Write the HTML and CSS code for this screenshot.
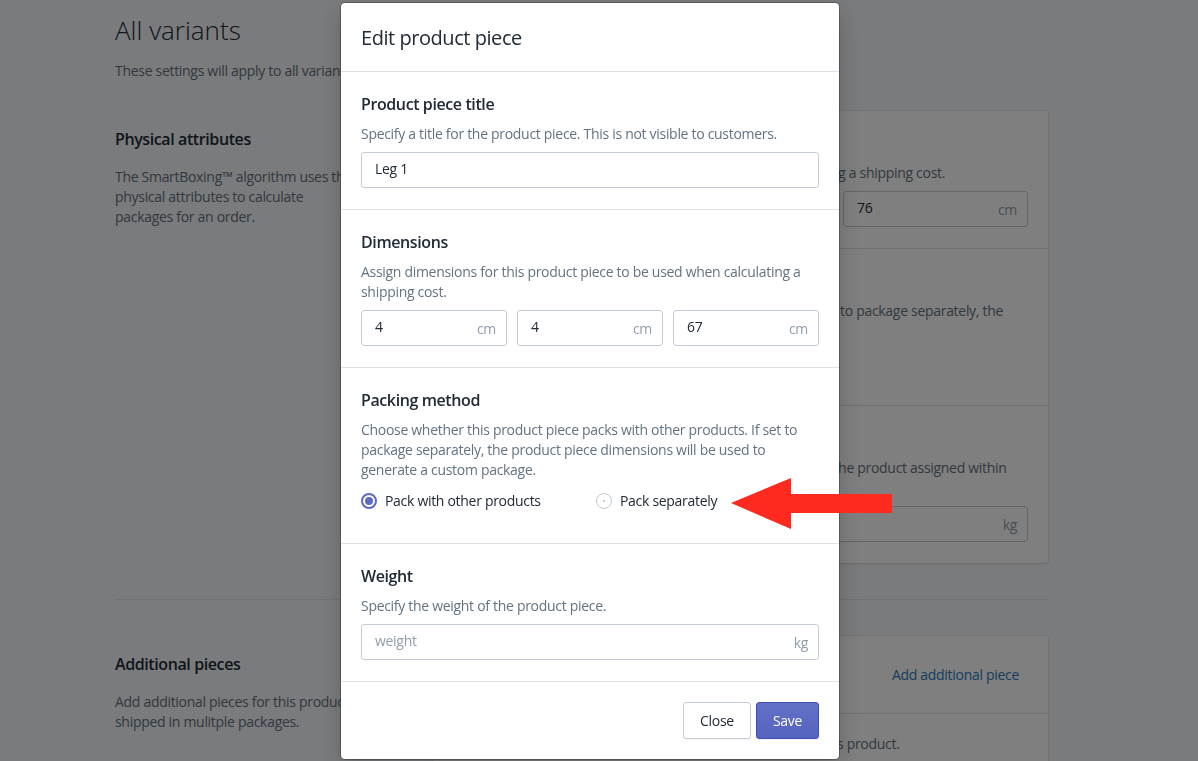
FILE: index.html
```html
<!DOCTYPE html>
<html>
<head>
<meta charset="utf-8">
<link rel="stylesheet" href="styles.css">
</head>
<body>
<div class="page">
  <h1 class="page-title">All variants</h1>
  <p class="page-sub">These settings will apply to all variants of this product unless overridden.</p>

  <div class="annotated">
    <div class="annotation">
      <h2 class="ann-title">Physical attributes</h2>
      <p class="ann-text">The SmartBoxing™ algorithm uses these<br>physical attributes to calculate<br>packages for an order.</p>
    </div>
    <div class="card">
      <div class="card-section">
        <h3 class="sec-title">Dimensions</h3>
        <p class="sec-text">Assign dimensions for this product to be used when calculating a shipping cost.</p>
        <div class="row3">
          <div class="field"><span class="val">20</span><span class="suffix">cm</span></div>
          <div class="field"><span class="val">20</span><span class="suffix">cm</span></div>
          <div class="field"><span class="val">76</span><span class="suffix">cm</span></div>
        </div>
      </div>
      <div class="card-section">
        <h3 class="sec-title">Packing method</h3>
        <p class="sec-text">Choose whether this product packs with other products. If set to package separately, the<br>product dimensions will be used for a custom package.</p>
        <div class="radios">
          <span class="radio-label"><span class="radio on"></span>Pack with other products</span>
          <span class="radio-label"><span class="radio"></span>Pack separately</span>
        </div>
      </div>
      <div class="card-section">
        <h3 class="sec-title">Weight</h3>
        <p class="sec-text">Specify the product weight. This should only be the weight of the product assigned within<br>the main package.</p>
        <div class="field"><span class="val">2.4</span><span class="suffix">kg</span></div>
      </div>
    </div>
  </div>

  <hr class="divider">

  <div class="annotated second">
    <div class="annotation">
      <h2 class="ann-title">Additional pieces</h2>
      <p class="ann-text">Add additional pieces for this product that will be<br>shipped in mulitple packages.</p>
    </div>
    <div class="card">
      <div class="card-header">
        <h3 class="sec-title">Pieces</h3>
        <a class="link">Add additional piece</a>
      </div>
      <div class="card-section">
        <p class="sec-text first">There are currently no other additional pieces assigned for this product.</p>
      </div>
    </div>
  </div>
</div>

<div class="backdrop"></div>

<div class="modal">
  <div class="modal-header">Edit product piece</div>
  <div class="modal-section">
    <h3 class="sec-title">Product piece title</h3>
    <p class="sec-text">Specify a title for the product piece. This is not visible to customers.</p>
    <div class="field"><span class="val">Leg 1</span></div>
  </div>
  <div class="modal-section">
    <h3 class="sec-title">Dimensions</h3>
    <p class="sec-text">Assign dimensions for this product piece to be used when calculating a<br>shipping cost.</p>
    <div class="row3">
      <div class="field"><span class="val">4</span><span class="suffix">cm</span></div>
      <div class="field"><span class="val">4</span><span class="suffix">cm</span></div>
      <div class="field"><span class="val">67</span><span class="suffix">cm</span></div>
    </div>
  </div>
  <div class="modal-section">
    <h3 class="sec-title">Packing method</h3>
    <p class="sec-text">Choose whether this product piece packs with other products. If set to<br>package separately, the product piece dimensions will be used to<br>generate a custom package.</p>
    <div class="radios">
      <span class="radio-label"><span class="radio on"></span>Pack with other products</span>
      <span class="radio-label"><span class="radio"></span>Pack separately</span>
    </div>
  </div>
  <div class="modal-section">
    <h3 class="sec-title">Weight</h3>
    <p class="sec-text">Specify the weight of the product piece.</p>
    <div class="field"><span class="val placeholder">weight</span><span class="suffix">kg</span></div>
  </div>
  <div class="modal-footer">
    <button class="btn">Close</button>
    <button class="btn primary">Save</button>
  </div>
</div>

<svg class="arrow" width="162" height="52" viewBox="0 0 162 52">
  <polygon points="0,25 60,0 60,16 161,16 161,35 60,35 60,51" fill="#ff2a1f"/>
</svg>
</body>
</html>
```

FILE: styles.css
```css
* { box-sizing: border-box; }
html, body { margin: 0; padding: 0; }
body {
  background: #f4f6f8;
  font-family: "Open Sans", "Noto Sans", sans-serif;
  font-size: 14px;
  line-height: 20px;
  letter-spacing: -0.3px;
  color: #212b36;
  width: 1198px;
  height: 761px;
  overflow: hidden;
}
h1, h2, h3, p { margin: 0; }

.page {
  padding: 13px 150px 0 115px;
}
.page-title {
  font-size: 26px;
  line-height: 34px;
  font-weight: 300;
  letter-spacing: 0;
  color: #212b36;
}
.page-sub {
  margin-top: 14px;
  color: #637381;
  white-space: nowrap;
}
.annotated {
  display: grid;
  grid-template-columns: 298px 615px;
  column-gap: 20px;
  margin-top: 30px;
}
.annotation { padding-top: 16px; }
.ann-title {
  font-size: 16px;
  line-height: 24px;
  font-weight: 600;
  letter-spacing: -0.4px;
}
.ann-text {
  margin-top: 16px;
  color: #637381;
  white-space: nowrap;
}
.card {
  background: #fff;
  border-radius: 3px;
  box-shadow: 0 0 0 1px rgba(63,63,68,0.05), 0 1px 3px 0 rgba(63,63,68,0.15);
}
.card-section {
  padding: 20px 20px 21px;
  border-top: 1px solid #dfe3e8;
}
.card-section:first-child { border-top: 0; }
.card-header {
  display: flex;
  justify-content: space-between;
  align-items: center;
  padding: 20px 29px 20px 20px;
  height: 77px;
}
.link { color: #2a7ab8; }
.divider {
  border: 0;
  border-top: 1px solid #dfe3e8;
  margin: 36px 0 0;
}
.annotated.second { margin-top: 36px; }

.sec-title {
  font-size: 16px;
  line-height: 24px;
  font-weight: 600;
  letter-spacing: -0.4px;
  color: #212b36;
}
.sec-text {
  margin-top: 8px;
  color: #637381;
  white-space: nowrap;
}
.sec-text.first { margin-top: 0; }
.field {
  margin-top: 8px;
  height: 36px;
  border: 1px solid #c4cdd5;
  border-radius: 3px;
  background: #fff;
  display: flex;
  align-items: center;
  justify-content: space-between;
  padding: 0 10px 0 13px;
}
.val { color: #212b36; margin-top: -2px; }
.placeholder { color: #919eab; }
.suffix { color: #919eab; margin-top: 1px; }
.row3 {
  display: grid;
  grid-template-columns: 1fr 1fr 1fr;
  gap: 10px;
  margin-top: 8px;
}
.row3 .field { margin-top: 0; }

.radios {
  display: flex;
  margin: 11px 0 12px;
  height: 20px;
  align-items: center;
}
.radio-label {
  display: inline-flex;
  align-items: center;
  color: #212b36;
  width: 235px;
  flex-shrink: 0;
}
.radio {
  flex-shrink: 0;
  width: 16px;
  height: 16px;
  border-radius: 50%;
  border: 1px solid #c4cdd5;
  margin-right: 8px;
  position: relative;
  background: #fff;
}
.radio::after {
  content: "";
  position: absolute;
  left: 6px; top: 6px;
  width: 2px; height: 2px;
  border-radius: 50%;
  background: #b6c0ca;
}
.radio.on { border: 2px solid #5c6ac4; }
.radio.on::after {
  left: 2px; top: 2px;
  width: 8px; height: 8px;
  background: #5c6ac4;
}

.backdrop {
  position: fixed;
  inset: 0;
  background: rgba(0,0,0,0.5);
}
.modal {
  position: fixed;
  left: 341px;
  top: 3px;
  width: 498px;
  background: #fff;
  border-radius: 4px;
  box-shadow: 0 0 0 1px rgba(0,0,0,0.25), 0 8px 24px rgba(0,0,0,0.2);
}
.modal-header {
  height: 69px;
  padding: 2px 20px 0;
  display: flex;
  align-items: center;
  font-size: 20px;
  line-height: 28px;
  font-weight: 400;
  letter-spacing: -0.45px;
  border-bottom: 1px solid #dfe3e8;
}
.modal-section {
  padding: 20px 20px 21px;
  border-bottom: 1px solid #dfe3e8;
}
.modal-section:nth-child(4) { padding-bottom: 20px; }
.modal-footer {
  padding: 20px;
  display: flex;
  justify-content: flex-end;
  gap: 5px;
}
.btn {
  height: 37px;
  padding: 0 16px;
  font: inherit;
  letter-spacing: -0.3px;
  border: 1px solid #c4cdd5;
  border-radius: 3px;
  background: #fff;
  color: #212b36;
  box-shadow: 0 1px 0 rgba(22,29,37,0.05);
}
.btn.primary {
  background: linear-gradient(#6371c7, #5563c1);
  border-color: #3f4eae;
  color: #fff;
}
.arrow {
  position: fixed;
  left: 731px;
  top: 478px;
}
```
